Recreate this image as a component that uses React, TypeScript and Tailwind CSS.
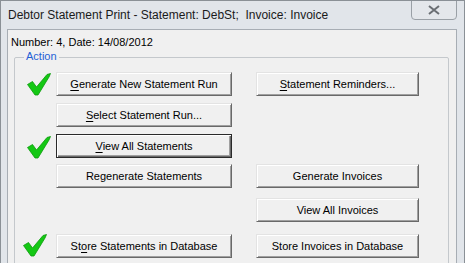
import type { ReactNode } from 'react';

function Check({ className = '' }: { className?: string }) {
  return (
    <svg width="24" height="23" viewBox="0 0 24 23" className={className}>
      <path
        d="M0.5 11.5 L5.5 8.5 L9.5 14 L20 1.5 L23.5 0.5 L22 4 L11 22 L8 22 Z"
        fill="#14c814"
        stroke="#0b9a0b"
        strokeWidth="0.8"
        strokeLinejoin="round"
      />
    </svg>
  );
}

function Btn({ children, def = false, w }: { children: ReactNode; def?: boolean; w: string }) {
  return (
    <div
      className={`${w} h-[24px] flex items-center justify-center bg-[#f0f0f0] text-[11px] text-black border ${
        def
          ? 'border-[#2a2a2a] shadow-[inset_1px_1px_0_#ffffff,inset_-1px_-1px_0_#696969,inset_-2px_-2px_0_#a0a0a0]'
          : 'border-t-[#e3e3e3] border-l-[#e3e3e3] border-r-[#696969] border-b-[#696969] shadow-[inset_1px_1px_0_#ffffff,inset_-1px_-1px_0_#a0a0a0]'
      }`}
    >
      <span className="leading-none">{children}</span>
    </div>
  );
}

const u = (c: string) => <span className="underline underline-offset-2">{c}</span>;

export default function App() {
  return (
    <div
      className="relative w-[465px] h-[263px] overflow-hidden bg-[#e1e5ea] border-l border-t border-r border-[#8a9096]"
      style={{ fontFamily: '"Liberation Sans", Arial, sans-serif' }}
    >
      {/* Title bar */}
      <div className="h-[28px] flex items-center pl-[7px] text-[12px] text-[#1a1a1a] whitespace-pre">
        Debtor Statement Print - Statement: DebSt;  Invoice: Invoice
      </div>
      <div className="absolute right-[7px] -top-px w-[46px] h-[20px] rounded-b-[4px] border border-[#9aa0a6] bg-[#e4e7eb] flex items-center justify-center">
        <svg width="12" height="10" viewBox="0 0 12 10">
          <path d="M1 1 L11 9 M11 1 L1 9" stroke="#6a6e73" strokeWidth="2" fill="none" />
        </svg>
      </div>

      {/* Client area */}
      <div className="ml-[6px] mr-[7px] h-[240px] bg-[#f0f0f0] border border-[#a7adb4]">
        <div className="pl-[3px] pt-[6px] h-[26px] text-[11px] leading-[13px] text-black">
          Number: 4, Date: 14/08/2012
        </div>

        {/* Group box */}
        <div className="relative mt-[1px] ml-[6px] mr-[7px] h-[230px] border border-[#c4c8cc] rounded-[2px]">
          <span className="absolute -top-[8px] left-[9px] px-[2px] bg-[#f0f0f0] text-[11px] leading-[13px] text-[#1f5fd6]">
            Action
          </span>

          <div className="flex items-center mt-[14px]">
            <div className="w-[41px] h-[24px] pl-[12px] pt-[1px]"><Check /></div>
            <Btn w="w-[176px]">{u('G')}enerate New Statement Run</Btn>
            <div className="w-[24px]" />
            <Btn w="w-[163px]">{u('S')}tatement Reminders...</Btn>
          </div>

          <div className="flex items-center mt-[7px]">
            <div className="w-[41px]" />
            <Btn w="w-[176px]">{u('S')}elect Statement Run...</Btn>
          </div>

          <div className="flex items-center mt-[7px]">
            <div className="w-[41px] h-[24px] pl-[12px] pt-[2px]"><Check /></div>
            <Btn w="w-[176px]" def>{u('V')}iew All Statements</Btn>
          </div>

          <div className="flex items-center mt-[6px]">
            <div className="w-[41px]" />
            <Btn w="w-[176px]">Regenerate Statements</Btn>
            <div className="w-[24px]" />
            <Btn w="w-[163px]">Generate Invoices</Btn>
          </div>

          <div className="flex items-center mt-[10px]">
            <div className="w-[41px]" />
            <div className="w-[176px]" />
            <div className="w-[24px]" />
            <Btn w="w-[163px]">View All Invoices</Btn>
          </div>

          <div className="flex items-center mt-[12px]">
            <div className="w-[41px] h-[24px] pl-[8px]"><Check /></div>
            <Btn w="w-[176px]">St{u('o')}re Statements in Database</Btn>
            <div className="w-[24px]" />
            <Btn w="w-[163px]">Store Invoices in Database</Btn>
          </div>
        </div>
      </div>
    </div>
  );
}
